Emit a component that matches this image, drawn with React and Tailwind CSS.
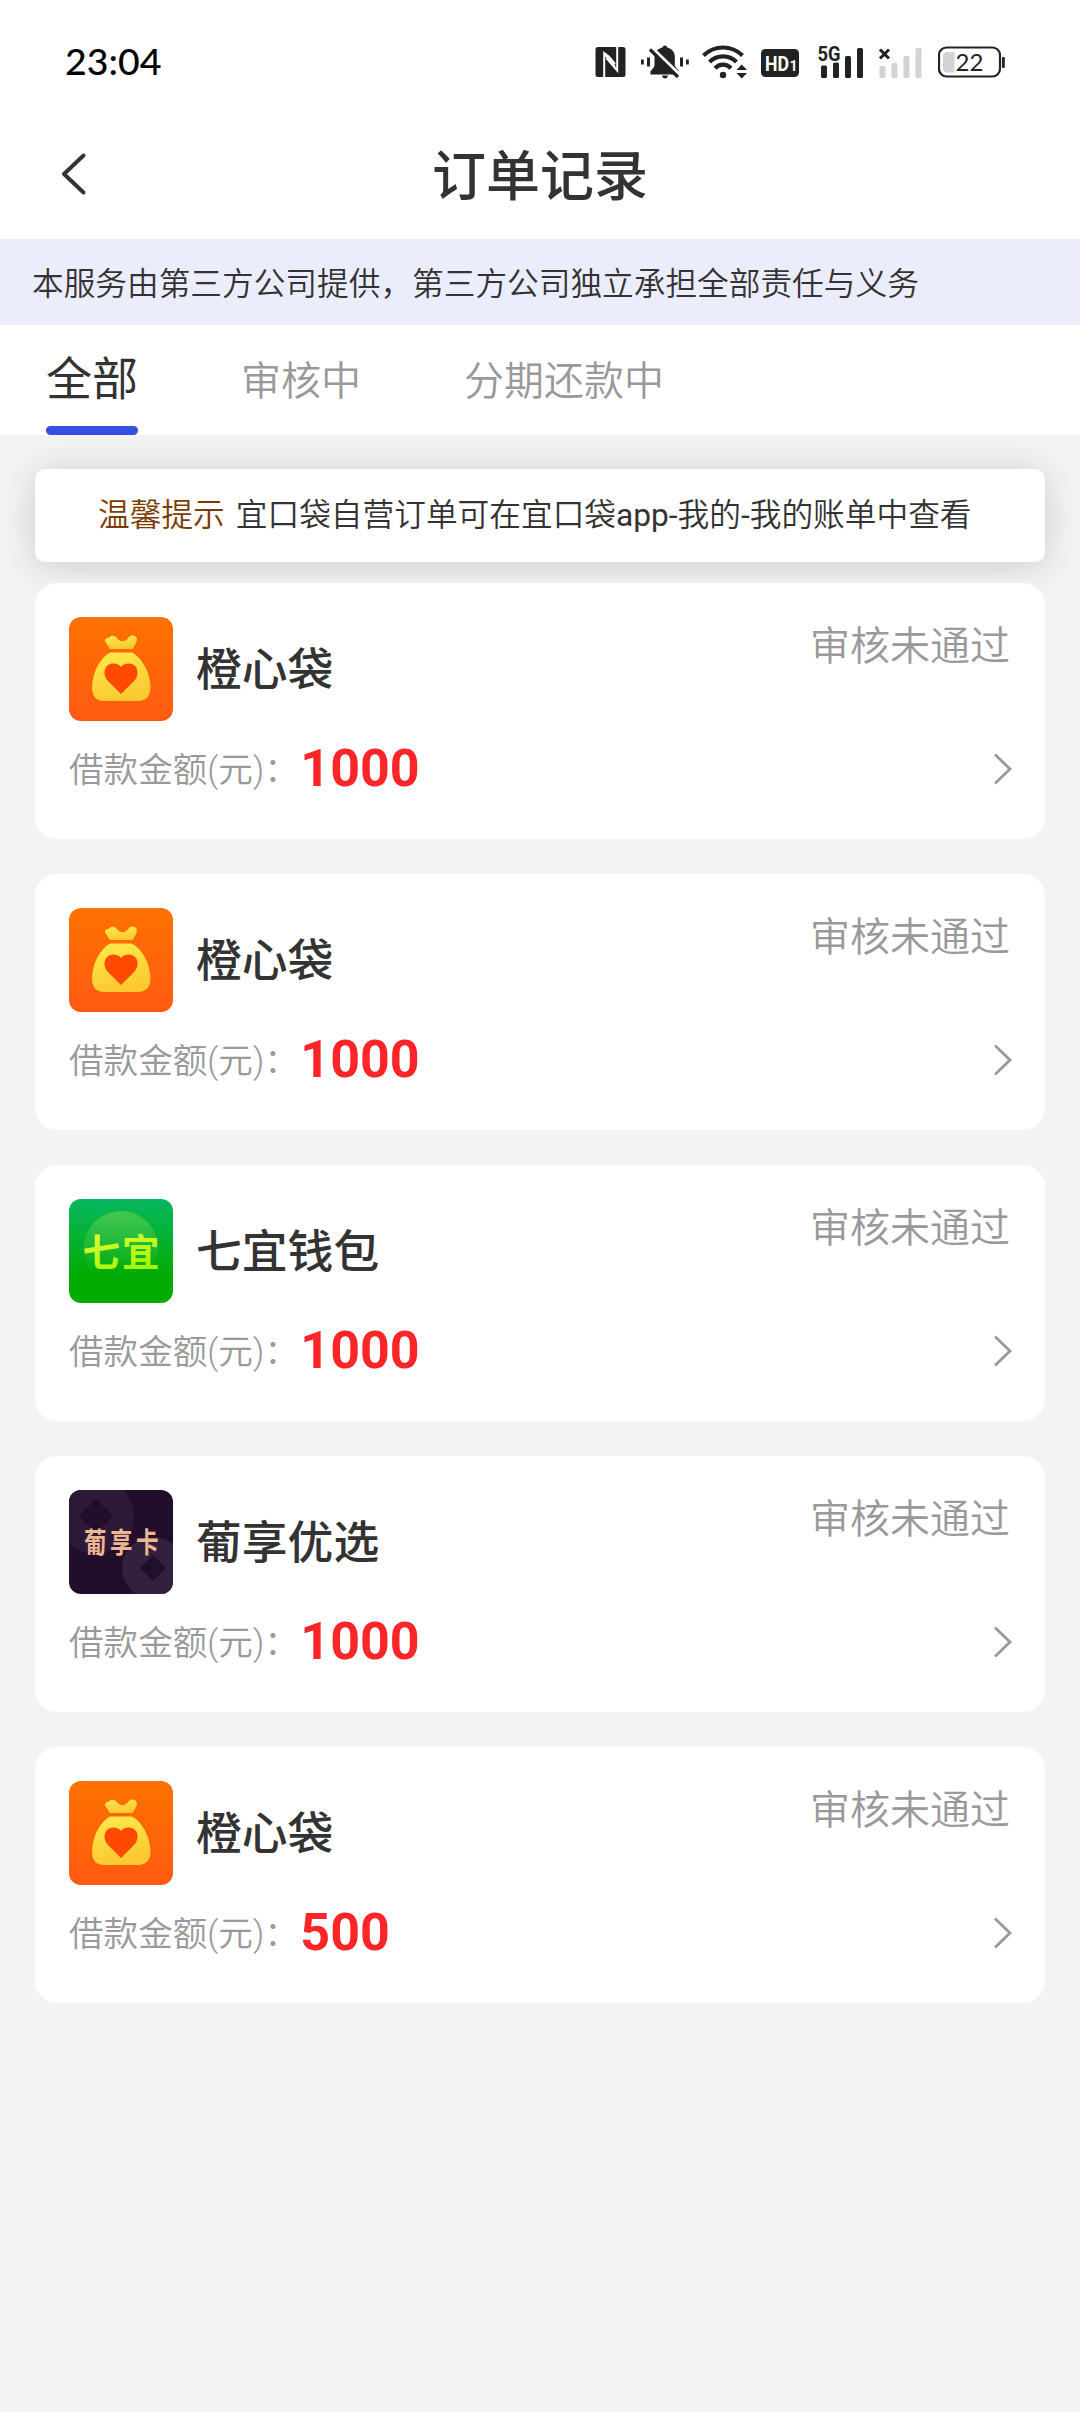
import { useState } from 'react';

const TABS = ['全部', '审核中', '分期还款中'];

const ORDERS = [
    { id: 1, name: '橙心袋', logo: 'bag', amount: 1000, status: '审核未通过' },
    { id: 2, name: '橙心袋', logo: 'bag', amount: 1000, status: '审核未通过' },
    { id: 3, name: '七宜钱包', logo: 'qiyi', amount: 1000, status: '审核未通过' },
    { id: 4, name: '葡享优选', logo: 'puxiang', amount: 1000, status: '审核未通过' },
    { id: 5, name: '橙心袋', logo: 'bag', amount: 500, status: '审核未通过' },
];

function StatusBar() {
    return (
        <div className="h-[126px] pl-[65px] pr-[74px] flex items-center justify-between">
            <span className="font-['Lato','Noto_Sans_CJK_SC',sans-serif] font-medium text-[37.5px] leading-none text-black -mt-[5px]">23:04</span>
            <div className="flex items-center text-[#222] -mt-[3px]">
                {/* nfc */}
                <svg className="w-[31px] h-[32px]" viewBox="0 0 31 32" fill="none">
                    <rect x="0.5" y="1" width="30" height="30" rx="2.5" fill="currentColor" />
                    <path d="M9.2 31V7.5L19.8 20.5" stroke="#fff" strokeWidth="2" />
                    <path d="M22.2 1V24.5L11.5 12" stroke="#fff" strokeWidth="2" />
                    <path d="M9.5 7.2L14 10.8L20 18" stroke="#fff" strokeWidth="2" />
                </svg>
                {/* muted bell */}
                <svg className="w-[50px] h-[36px] ml-[14px]" viewBox="0 0 50 36">
                    <g fill="currentColor">
                        <rect x="1" y="15.5" width="2.8" height="5" />
                        <rect x="7" y="13.5" width="3" height="9" />
                        <rect x="40" y="13.5" width="3" height="9" />
                        <rect x="46" y="15.5" width="2.8" height="5" />
                        <path d="M25 1.5c1.4 0 2 .8 2.2 2c4.5 1 7.6 4.500 7.600 9v8.500c0 2 3.500 4.500 4 6v3.500H10.500V28c0-2 4-4 4-7v-9c0-4.200 3.500-7.500 8-8.500c.2-1.200 1.200-2 2.500-2z" />
                        <path d="M22 31.500h6c-.4 2-1.500 3-3 3s-2.600-1-3-3z" />
                    </g>
                    <path d="M12.500 4.500L41 32" stroke="#fff" strokeWidth="3.400" />
                    <path d="M10 5.500L38 33" stroke="currentColor" strokeWidth="3.200" />
                </svg>
                {/* wifi */}
                <svg className="w-[46px] h-[36px] ml-[12px]" viewBox="0 0 46 36" fill="none" stroke="currentColor" strokeWidth="4.200">
                    <path d="M1.500 11.500C12.500.8 29.500.8 40.500 11.500" />
                    <path d="M7.500 18C15 10.500 27 10.500 34.500 18" />
                    <path d="M13 24.300C17.500 19.500 24.500 19.500 29 24.300" />
                    <circle cx="21" cy="31" r="3.200" fill="currentColor" stroke="none" />
                    <path d="M34.500 26L39.700 20.500L45 26ZM34.500 29L39.700 34.500L45 29Z" fill="currentColor" stroke="none" />
                </svg>
                {/* hd */}
                <svg className="w-[40px] h-[32px] ml-[12px]" viewBox="0 0 40 32">
                    <rect x="1" y="3" width="38" height="28" rx="4.500" fill="currentColor" />
                    <text x="5" y="24.500" fontFamily="Roboto" fontWeight="700" fontSize="21" fill="#fff" textLength="24" lengthAdjust="spacingAndGlyphs">HD</text>
                    <text x="29.500" y="24.500" fontFamily="Roboto" fontWeight="700" fontSize="14" fill="#fff">1</text>
                </svg>
                {/* 5g */}
                <svg className="w-[48px] h-[36px] ml-[17px] overflow-visible" viewBox="0 0 48 36">
                    <g fill="currentColor">
                        <rect x="4" y="21.500" width="6" height="12.500" rx="1.500" />
                        <rect x="16" y="18.500" width="6" height="15.500" rx="1.500" />
                        <rect x="28" y="12" width="6" height="22" rx="1.500" />
                        <rect x="40" y="4" width="6" height="30" rx="1.500" />
                    </g>
                    <text x="0.500" y="17" fontFamily="Roboto" fontWeight="700" fontSize="20.500" fill="currentColor" stroke="#fff" strokeWidth="2.500" paintOrder="stroke" textLength="23" lengthAdjust="spacingAndGlyphs">5G</text>
                </svg>
                {/* no sim */}
                <svg className="w-[46px] h-[36px] ml-[13px]" viewBox="0 0 46 36">
                    <g fill="#d3d3d3">
                        <rect x="1.500" y="22" width="6" height="12" rx="1.500" />
                        <rect x="13.500" y="19" width="6" height="15" rx="1.500" />
                        <rect x="25.500" y="12" width="6" height="22" rx="1.500" />
                        <rect x="37.500" y="4" width="6" height="30" rx="1.500" />
                    </g>
                    <path d="M2 5.500L11 14.500M11 5.500L2 14.500" stroke="currentColor" strokeWidth="3" />
                </svg>
                {/* battery */}
                <svg className="w-[68px] h-[32px] ml-[14px]" viewBox="0 0 68 32">
                    <rect x="1" y="1.500" width="61" height="29" rx="7.500" fill="none" stroke="currentColor" strokeWidth="2.200" />
                    <path d="M9 6H16.500V26.500H9C6.500 26.500 5 25 5 22.500V10C5 7.500 6.500 6 9 6Z" fill="#d3d3d3" />
                    <rect x="64" y="11" width="2.800" height="11" rx="1" fill="currentColor" />
                    <text x="31.500" y="24.500" textAnchor="middle" fontFamily="Lato" fontSize="24" fill="currentColor">22</text>
                </svg>
            </div>
        </div>
    );
}

function BagLogo() {
    return (
        <svg className="w-full h-full" viewBox="0 0 104 104">
            <defs>
                <linearGradient id="bagBg" x1="0" y1="0" x2="0" y2="1">
                    <stop offset="0" stopColor="#ff7200" />
                    <stop offset="1" stopColor="#ff5a12" />
                </linearGradient>
                <linearGradient id="bagFill" x1="0" y1="0" x2="0.3" y2="1">
                    <stop offset="0" stopColor="#ffeb4c" />
                    <stop offset="1" stopColor="#fcc931" />
                </linearGradient>
            </defs>
            <rect width="104" height="104" fill="url(#bagBg)" />
            <path d="M41 32L36 24.500C35.500 22 37.500 21 40 20.500C42 18 45.500 18.500 47.500 20.500C51 25.500 56 25.500 59.500 20.500C61.500 17.500 66 18 67.500 20.500C68.500 22.500 67.500 25 66.500 27L63.500 32Z" fill="url(#bagFill)" />
            <path d="M41 35.500H63C73 41 81 55 81.500 70C81.500 79 77 84 69 84H35C27 84 23 79 23 70C23.500 55 31 41 41 35.500Z" fill="url(#bagFill)" />
            <path d="M52 77L39 64C33 57.500 35 47 44 46.500C48 46.500 50.500 48 52 50C53.500 48 56 46.500 60 46.500C69 47 71.500 57.500 65 64Z" fill="#ff4a00" />
        </svg>
    );
}

function QiyiLogo() {
    return (
        <svg className="w-full h-full" viewBox="0 0 104 104">
            <defs>
                <linearGradient id="qyBg" x1="0" y1="0" x2="0" y2="1">
                    <stop offset="0" stopColor="#08b760" />
                    <stop offset="0.75" stopColor="#02ab02" />
                    <stop offset="1" stopColor="#02ab02" />
                </linearGradient>
                <linearGradient id="qyCircle" x1="0" y1="0" x2="0" y2="1">
                    <stop offset="0" stopColor="#4cc94a" stopOpacity="0.85" />
                    <stop offset="0.8" stopColor="#4cc94a" stopOpacity="0" />
                </linearGradient>
                <linearGradient id="qyText" x1="0" y1="0" x2="0.4" y2="1">
                    <stop offset="0" stopColor="#f2ff3c" />
                    <stop offset="1" stopColor="#a2f508" />
                </linearGradient>
            </defs>
            <rect width="104" height="104" fill="url(#qyBg)" />
            <circle cx="52" cy="49" r="37" fill="url(#qyCircle)" />
            <text x="13.500" y="67" fontFamily="'Noto Sans CJK SC'" fontWeight="700" fontSize="37.500" letterSpacing="2" fill="url(#qyText)">七宜</text>
        </svg>
    );
}

function PuxiangLogo() {
    return (
        <svg className="w-full h-full" viewBox="0 0 104 104">
            <rect width="104" height="104" fill="#210e2a" />
            <circle cx="27" cy="26" r="38" fill="#2c1936" />
            <path d="M27 9L44 26L27 43L10 26Z" fill="#210e2a" />
            <circle cx="84" cy="78" r="31" fill="#33203c" />
            <path d="M84 65L97 78L84 91L71 78Z" fill="#210e2a" />
            <text transform="translate(15 63) scale(1 1.280)" fontFamily="'Noto Sans CJK SC'" fontWeight="700" fontSize="22.500" letterSpacing="3.500" fill="#edb793">葡享卡</text>
        </svg>
    );
}

const LOGOS = {
    bag: BagLogo,
    qiyi: QiyiLogo,
    puxiang: PuxiangLogo,
};

function OrderCard({ order }) {
    const Logo = LOGOS[order.logo];
    return (
        <div className="h-[256px] bg-white rounded-[22px] pl-[34px] pr-[32px] pt-[34px]">
            <div className="flex h-[104px]">
                <div className="w-[104px] h-[104px] rounded-[12px] overflow-hidden flex-shrink-0">
                    <Logo />
                </div>
                <p className="ml-[23px] pt-[24px] text-[45.8px] leading-[60px] font-medium text-[#333]">{order.name}</p>
                <p className="ml-auto mr-[3px] pt-[2px] text-[40px] leading-[56px] font-[350] text-[#999]">{order.status}</p>
            </div>
            <div className="flex items-center h-[60px] mt-[18px]">
                <span className="pt-[2px] text-[34.6px] leading-[60px] font-[350] text-[#999]">
                    借款金额<span className="font-['Roboto'] font-light">(</span>元<span className="font-['Roboto'] font-light">)</span>：
                </span>
                <span className="ml-[1.5px] font-['Roboto',sans-serif] font-bold text-[52px] leading-[60px] text-[#fc2528]">{order.amount}</span>
                <svg className="ml-auto w-[20px] h-[32px]" viewBox="0 0 20 32" fill="none" stroke="#999" strokeWidth="2.800">
                    <path d="M2 1.500L17 16L2 30.500" />
                </svg>
            </div>
        </div>
    );
}

export default function App() {
    const [tab, setTab] = useState('全部');

    return (
        <div className="w-[1080px] h-[2412px] bg-[#f3f3f3] overflow-hidden font-['Roboto','Noto_Sans_CJK_SC',sans-serif] text-[#333]">
            <div className="relative z-10 bg-white">
                <StatusBar />
                <div className="h-[113px] flex items-start">
                    <div className="w-[200px] pl-[60px] pt-[26px]">
                        <svg className="w-[28px] h-[44px]" viewBox="0 0 28 44" fill="none" stroke="#333" strokeWidth="4" strokeLinecap="round" strokeLinejoin="round">
                            <path d="M23.500 3.500L4 22L23.500 40.500" />
                        </svg>
                    </div>
                    <h1 className="flex-1 text-center text-[54px] leading-[103px] font-medium">订单记录</h1>
                    <div className="w-[200px]" />
                </div>
                <div className="h-[86px] bg-[#ebedfc] pl-[32px] text-[31.68px] leading-[91px] font-[350] whitespace-nowrap">
                    本服务由第三方公司提供，第三方公司独立承担全部责任与义务
                </div>
                <div className="flex h-[110px] pl-[46px]">
                    {TABS.map(t => (
                        <button
                            key={t}
                            onClick={() => setTab(t)}
                            className={`flex flex-col items-center justify-between mr-[103px] whitespace-nowrap ${tab === t ? 'text-[46px] leading-[109px] text-[#333]' : 'text-[40px] leading-[113px] font-[350] text-[#999]'}`}
                        >
                            <span className="h-[101px]">{t}</span>
                            {tab === t && <span className="w-full h-[9px] rounded-full bg-[#3550e0]" />}
                        </button>
                    ))}
                </div>
            </div>

            <div className="px-[35px] pt-[34px]">
                <div className="h-[93px] rounded-[10px] bg-white shadow-[0_4px_36px_rgba(0,0,0,0.16)] flex pl-[63px] gap-[11px] text-[31.7px] leading-[93px] font-[350] whitespace-nowrap">
                    <span className="text-[#7b3c00]">温馨提示</span>
                    <span>宜口袋自营订单可在宜口袋<span className="font-normal">app-</span>我的<span className="font-normal">-</span>我的账单中查看</span>
                </div>
                <div className="mt-[21px] flex flex-col gap-[35px]">
                    {ORDERS.map(o => <OrderCard key={o.id} order={o} />)}
                </div>
            </div>
        </div>
    );
}
